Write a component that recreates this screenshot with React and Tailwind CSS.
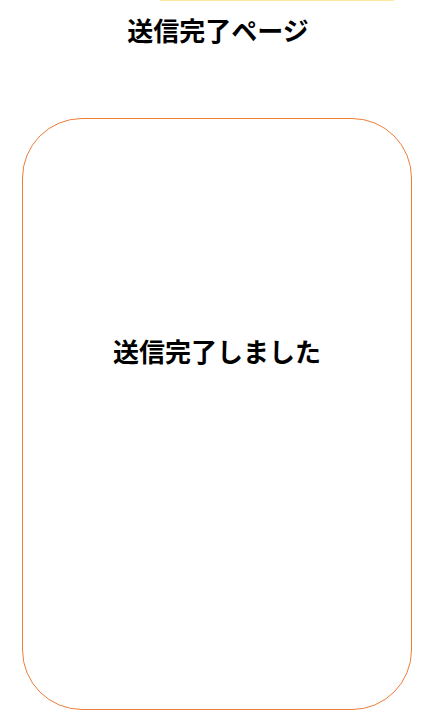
import React from 'react';

const font = { fontFamily: '"Noto Sans CJK JP", "Noto Sans", sans-serif' };

const SentPage = () => {
  return (
    <div className="h-[712px] overflow-hidden bg-white" style={font}>
      <div className="ml-[160px] h-px w-[234px] bg-[#fde9a0]" />
      <h1 className="mt-[11px] text-center text-[26px] font-bold leading-[36px] text-black">
        送信完了ページ
      </h1>
      <div className="ml-[22px] mt-[70px] h-[592px] w-[390px] rounded-[60px] border-[1.5px] border-[#ef7d3a]">
        <p className="pt-[214px] text-center text-[26px] font-bold leading-[36px] text-black">
          送信完了しました
        </p>
      </div>
    </div>
  );
};

export default function App() {
  return <SentPage />;
}
